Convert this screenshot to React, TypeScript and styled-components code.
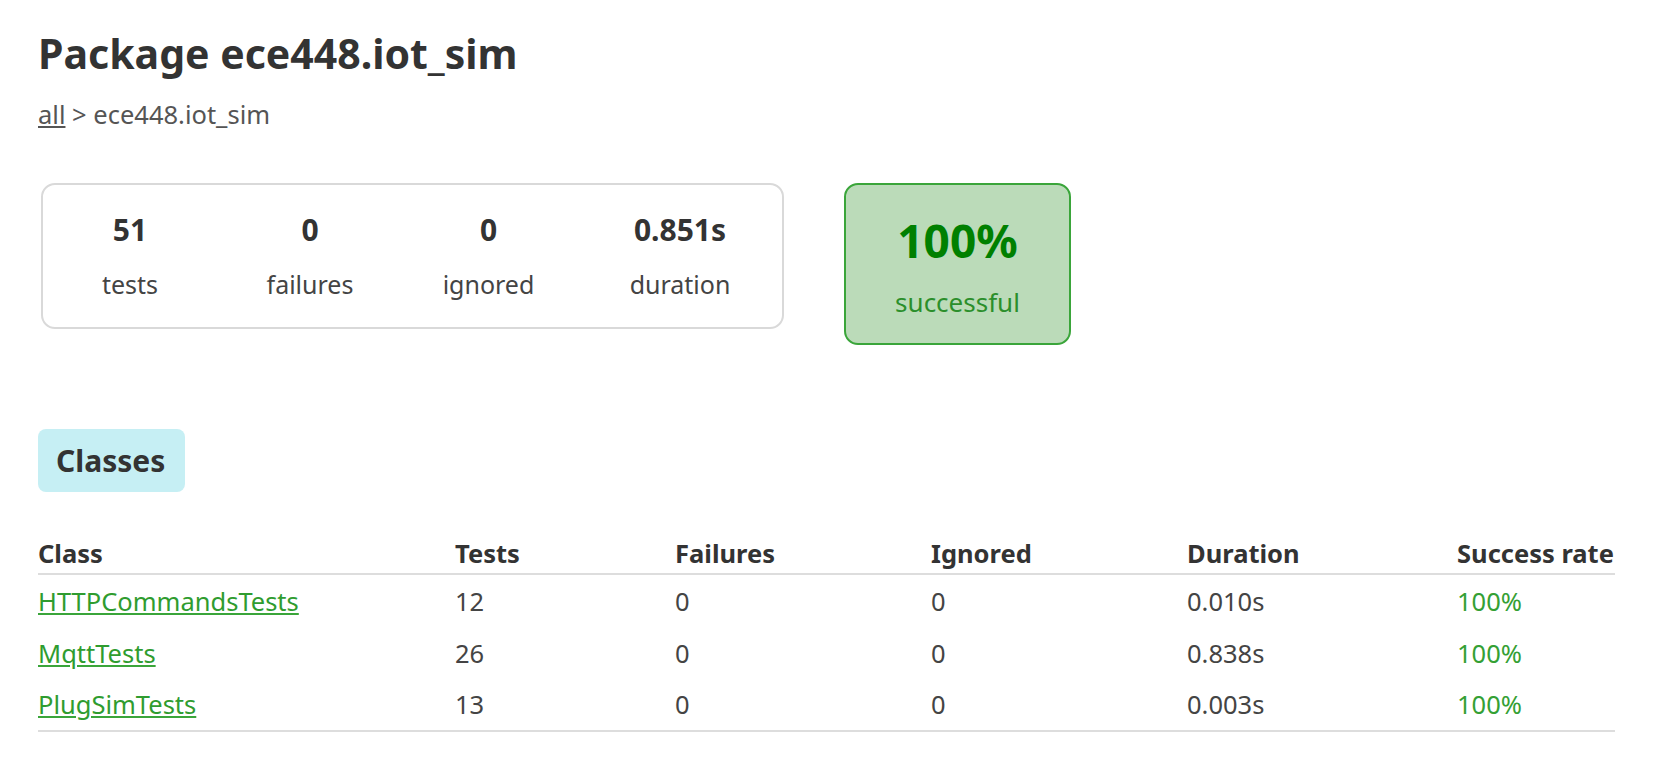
import React from 'react';
import styled, { createGlobalStyle } from 'styled-components';

const GlobalStyle = createGlobalStyle`
    html, body {
        margin: 0;
        padding: 0;
        background: #ffffff;
    }
    body {
        font-family: "Noto Sans", "Open Sans", sans-serif;
        color: #333333;
    }
`

const Page = styled.div`
    padding: 22px 61px 40px 38px;
`

const Title = styled.h1`
    margin: 0;
    font-size: 41px;
    font-weight: 700;
    line-height: 62px;
    color: #333;
`

const Breadcrumb = styled.div`
    margin-top: 13px;
    font-size: 25.5px;
    line-height: 34px;
    color: #555;
    a {
        color: #555;
        text-decoration: underline;
    }
`

const SummaryRow = styled.div`
    display: flex;
    align-items: flex-start;
    gap: 60px;
    margin-top: 52px;
    margin-left: 3px;
`

const StatsBox = styled.div`
    display: flex;
    width: 743px;
    height: 146px;
    box-sizing: border-box;
    border: 2px solid #d9d9d9;
    border-radius: 14px;
`

const Stat = styled.div<{ $w: number }>`
    width: ${p => p.$w}px;
    flex-shrink: 0;
    display: flex;
    flex-direction: column;
    align-items: center;
    padding-top: 25px;
    gap: 17px;
`

const StatValue = styled.div`
    font-size: 30px;
    font-weight: 700;
    line-height: 40px;
`

const StatLabel = styled.div`
    font-size: 25px;
    line-height: 34px;
    color: #444;
`

const SuccessBox = styled.div`
    width: 227px;
    height: 162px;
    box-sizing: border-box;
    border: 2px solid #3aa53a;
    border-radius: 14px;
    background: #bbdbb9;
    display: flex;
    flex-direction: column;
    align-items: center;
    padding-top: 25px;
    gap: 15px;
    color: #008000;
`

const SuccessValue = styled.div`
    font-size: 46px;
    font-weight: 700;
    line-height: 60px;
`

const SuccessLabel = styled.div`
    font-size: 26px;
    line-height: 34px;
    color: #2b8f2b;
`

const Tab = styled.div`
    display: inline-block;
    margin-top: 84px;
    padding: 0 20px 0 18px;
    height: 63px;
    line-height: 63px;
    background: #c6eff4;
    border-radius: 8px;
    font-size: 30px;
    font-weight: 700;
    color: #333;
`

const Table = styled.table`
    width: 1577px;
    table-layout: fixed;
    margin-top: 43px;
    border-collapse: collapse;
    font-size: 25.5px;
    border-bottom: 2px solid #ddd;
`

const Th = styled.th<{ $w: number }>`
    width: ${p => p.$w}px;
    text-align: left;
    font-weight: 700;
    line-height: 36px;
    padding: 0 0 2px 0;
    border-bottom: 2px solid #ddd;
    color: #333;
    white-space: nowrap;
`

const Td = styled.td<{ $ok?: boolean }>`
    padding: 0;
    height: 51.7px;
    color: ${p => (p.$ok ? '#34a034' : '#444')};
    white-space: nowrap;
`

const ClassLink = styled.a`
    color: #2f9c2f;
    text-decoration: underline;
    text-decoration-color: #3aa53a;
`

const rows = [
    { name: 'HTTPCommandsTests', tests: 12, failures: 0, ignored: 0, duration: '0.010s', rate: '100%' },
    { name: 'MqttTests', tests: 26, failures: 0, ignored: 0, duration: '0.838s', rate: '100%' },
    { name: 'PlugSimTests', tests: 13, failures: 0, ignored: 0, duration: '0.003s', rate: '100%' },
];

const App = () => {
    return (
        <Page>
            <GlobalStyle />
            <Title>Package ece448.iot_sim</Title>
            <Breadcrumb><a href='#'>all</a> &gt; ece448.iot_sim</Breadcrumb>
            <SummaryRow>
                <StatsBox>
                    <Stat $w={174}><StatValue>51</StatValue><StatLabel>tests</StatLabel></Stat>
                    <Stat $w={186}><StatValue>0</StatValue><StatLabel>failures</StatLabel></Stat>
                    <Stat $w={171}><StatValue>0</StatValue><StatLabel>ignored</StatLabel></Stat>
                    <Stat $w={212}><StatValue>0.851s</StatValue><StatLabel>duration</StatLabel></Stat>
                </StatsBox>
                <SuccessBox>
                    <SuccessValue>100%</SuccessValue>
                    <SuccessLabel>successful</SuccessLabel>
                </SuccessBox>
            </SummaryRow>
            <Tab>Classes</Tab>
            <Table>
                <thead>
                    <tr>
                        <Th $w={417}>Class</Th>
                        <Th $w={220}>Tests</Th>
                        <Th $w={256}>Failures</Th>
                        <Th $w={256}>Ignored</Th>
                        <Th $w={270}>Duration</Th>
                        <Th $w={158}>Success rate</Th>
                    </tr>
                </thead>
                <tbody>
                    {rows.map(r => (
                        <tr key={r.name}>
                            <Td><ClassLink href='#'>{r.name}</ClassLink></Td>
                            <Td>{r.tests}</Td>
                            <Td>{r.failures}</Td>
                            <Td>{r.ignored}</Td>
                            <Td>{r.duration}</Td>
                            <Td $ok>{r.rate}</Td>
                        </tr>
                    ))}
                </tbody>
            </Table>
        </Page>
    );
};

export default App;
